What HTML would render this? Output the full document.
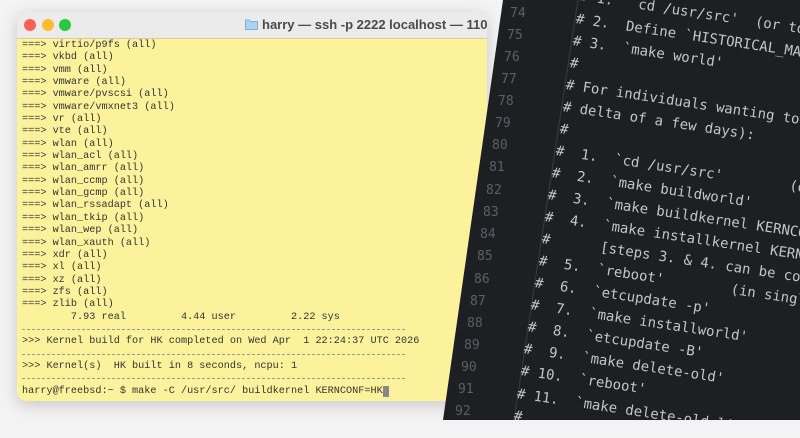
<!DOCTYPE html>
<html><head><meta charset="utf-8"><style>
html,body{margin:0;padding:0}
body{width:800px;height:420px;overflow:hidden;background:#f3f3f3;position:relative;font-family:"Liberation Sans",sans-serif}
.win{position:absolute;left:17px;top:12px;width:470px;height:389px;border-radius:10px;overflow:hidden;box-shadow:0 4px 16px rgba(0,0,0,.18);background:#fdf29c}
.tb{position:absolute;left:0;top:0;right:0;height:26px;background:#ebebeb;border-bottom:1px solid #d4cf9a}
.dot{position:absolute;top:7px;width:12px;height:12px;border-radius:50%}
.title{position:absolute;left:228px;top:5px;font-size:13px;font-weight:bold;color:#4a4a4a;white-space:nowrap}
.term{position:absolute;left:5px;top:28px;font-family:"Liberation Mono",monospace;font-size:10.2px;line-height:12.35px;color:#333;white-space:pre}
.hr{position:absolute;left:5px;width:383px;height:0;border-top:1px dashed #999}
.panel{position:absolute;left:0;top:0;width:800px;height:420px;background:#1e1f22;clip-path:polygon(503px 0,800px 0,800px 420px,443px 420px)}
.ln{position:absolute;font-family:"DejaVu Sans Mono",monospace;font-size:13px;color:#5c5f66}
.cl{position:absolute;font-family:"DejaVu Sans Mono",monospace;font-size:14px;color:#c4c5c9;white-space:pre;transform:rotate(8.5deg);transform-origin:0 50%}
.sep{position:absolute;left:0;top:0;width:800px;height:420px}
</style></head><body>
<div class="win">
 <div class="tb">
  <div class="dot" style="left:7px;background:#fe5f57"></div>
  <div class="dot" style="left:25px;background:#febc2e"></div>
  <div class="dot" style="left:42px;background:#28c840"></div>
  <svg style="position:absolute;left:228px;top:6px" width="13" height="12"><path d="M0.5 2h4l1 1.5h7v8h-12z" fill="#a9d3f2" stroke="#7fb3dc"/></svg>
  <div class="title" style="left:245px">harry — ssh -p 2222 localhost — 110×29</div>
 </div>
 <div class="term">===&gt; virtio/p9fs (all)
===&gt; vkbd (all)
===&gt; vmm (all)
===&gt; vmware (all)
===&gt; vmware/pvscsi (all)
===&gt; vmware/vmxnet3 (all)
===&gt; vr (all)
===&gt; vte (all)
===&gt; wlan (all)
===&gt; wlan_acl (all)
===&gt; wlan_amrr (all)
===&gt; wlan_ccmp (all)
===&gt; wlan_gcmp (all)
===&gt; wlan_rssadapt (all)
===&gt; wlan_tkip (all)
===&gt; wlan_wep (all)
===&gt; wlan_xauth (all)
===&gt; xdr (all)
===&gt; xl (all)
===&gt; xz (all)
===&gt; zfs (all)
===&gt; zlib (all)
        7.93 real         4.44 user         2.22 sys

&gt;&gt;&gt; Kernel build for HK completed on Wed Apr  1 22:24:37 UTC 2026

&gt;&gt;&gt; Kernel(s)  HK built in 8 seconds, ncpu: 1

harry@freebsd:~ $ make -C /usr/src/ buildkernel KERNCONF=HK<span style="background:#888;color:#888">_</span></div>
 <div class="hr" style="top:317px"></div>
 <div class="hr" style="top:342px"></div>
 <div class="hr" style="top:366px"></div>
</div>
<div class="panel">
 <svg class="sep"><line x1="578" y1="0" x2="514" y2="420" stroke="#3a3b40" stroke-width="1"/></svg>
 <div class="ln" style="left:510px;top:6px">74</div>
 <div class="ln" style="left:507px;top:28px">75</div>
 <div class="ln" style="left:504px;top:50px">76</div>
 <div class="ln" style="left:501px;top:72px">77</div>
 <div class="ln" style="left:498px;top:94px">78</div>
 <div class="ln" style="left:495px;top:116px">79</div>
 <div class="ln" style="left:492px;top:138px">80</div>
 <div class="ln" style="left:489px;top:160px">81</div>
 <div class="ln" style="left:486px;top:183px">82</div>
 <div class="ln" style="left:483px;top:205px">83</div>
 <div class="ln" style="left:480px;top:227px">84</div>
 <div class="ln" style="left:477px;top:249px">85</div>
 <div class="ln" style="left:474px;top:272px">86</div>
 <div class="ln" style="left:470px;top:294px">87</div>
 <div class="ln" style="left:467px;top:316px">88</div>
 <div class="ln" style="left:464px;top:338px">89</div>
 <div class="ln" style="left:461px;top:360px">90</div>
 <div class="ln" style="left:458px;top:382px">91</div>
 <div class="ln" style="left:455px;top:404px">92</div>
 <div class="cl" style="left:580px;top:-12px"># 1.  `cd /usr/src'  (or to</div>
 <div class="cl" style="left:576px;top:11px"># 2.  Define `HISTORICAL_MAKE_WORLD'</div>
 <div class="cl" style="left:573px;top:33px"># 3.  `make world'</div>
 <div class="cl" style="left:570px;top:55px">#</div>
 <div class="cl" style="left:566px;top:77px"># For individuals wanting to upgrade</div>
 <div class="cl" style="left:563px;top:99px"># delta of a few days):</div>
 <div class="cl" style="left:560px;top:121px">#</div>
 <div class="cl" style="left:556px;top:143px">#  1.  `cd /usr/src'        (or</div>
 <div class="cl" style="left:552px;top:165px">#  2.  `make buildworld'</div>
 <div class="cl" style="left:548px;top:187px">#  3.  `make buildkernel KERNCONF</div>
 <div class="cl" style="left:545px;top:209px">#  4.  `make installkernel KERNCONF</div>
 <div class="cl" style="left:542px;top:231px">#      [steps 3. &amp; 4. can be comb</div>
 <div class="cl" style="left:539px;top:253px">#  5.  `reboot'        (in single</div>
 <div class="cl" style="left:535px;top:275px">#  6.  `etcupdate -p'</div>
 <div class="cl" style="left:531px;top:297px">#  7.  `make installworld'</div>
 <div class="cl" style="left:528px;top:319px">#  8.  `etcupdate -B'</div>
 <div class="cl" style="left:524px;top:341px">#  9.  `make delete-old'</div>
 <div class="cl" style="left:521px;top:363px"># 10.  `reboot'</div>
 <div class="cl" style="left:517px;top:386px"># 11.  `make delete-old-libs'</div>
 <div class="cl" style="left:514px;top:408px">#</div>
</div>
</body></html>
